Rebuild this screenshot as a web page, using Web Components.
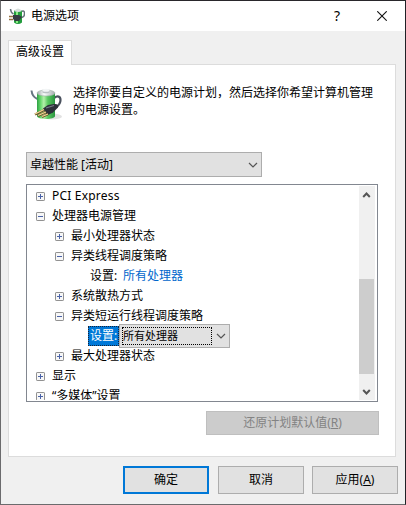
<!DOCTYPE html>
<html lang="zh-CN">
<head>
<meta charset="utf-8">
<title>电源选项</title>
<style>
html,body{margin:0;width:406px;height:505px;overflow:hidden}
body{font:12px/16px "Noto Sans","Noto Sans CJK SC",sans-serif;color:#000;background:#29272b}
</style>
</head>
<body>
<power-window heading="电源选项">
  <tab-sheet label="高级设置">
    <plan-intro>选择你要自定义的电源计划，然后选择你希望计算机管理的电源设置。</plan-intro>
    <combo-box class="plan">卓越性能 [活动]</combo-box>
    <tree-view>
      <tree-row style="letter-spacing:.2px">PCI Express</tree-row>
      <tree-row open>处理器电源管理</tree-row>
      <tree-row level="2">最小处理器状态</tree-row>
      <tree-row level="2" open>异类线程调度策略</tree-row>
      <setting-row label="设置:"><span class="link">所有处理器</span></setting-row>
      <tree-row level="2">系统散热方式</tree-row>
      <tree-row level="2" open>异类短运行线程调度策略</tree-row>
      <setting-row label="设置:" selected><combo-box focused>所有处理器</combo-box></setting-row>
      <tree-row level="2">最大处理器状态</tree-row>
      <tree-row>显示</tree-row>
      <tree-row>“多媒体”设置</tree-row>
    </tree-view>
    <push-button class="restore" disabled>还原计划默认值(<u>R</u>)</push-button>
  </tab-sheet>
  <push-button slot="actions" default>确定</push-button>
  <push-button slot="actions">取消</push-button>
  <push-button slot="actions">应用(<u>A</u>)</push-button>
</power-window>
<script>
const define = (name, render) => customElements.define(name, class extends HTMLElement {
  constructor() {
    super();
    this.attachShadow({mode: 'open'}).innerHTML =
      '<style>*{box-sizing:border-box}:host{box-sizing:border-box}</style>' + render(this);
  }
});

define('battery-icon', () => `<style>:host{display:block;flex:none}svg{display:block;width:100%;height:100%}</style>
<svg viewBox="0 0 34 34">
  <defs>
    <linearGradient id="g"><stop offset="0" stop-color="#2f9f45"/><stop offset=".18" stop-color="#5fd566"/><stop offset=".38" stop-color="#b4f0aa"/><stop offset=".6" stop-color="#58c95f"/><stop offset="1" stop-color="#2a9440"/></linearGradient>
    <linearGradient id="m"><stop offset="0" stop-color="#a0a8a9"/><stop offset=".4" stop-color="#fafcfb"/><stop offset="1" stop-color="#a2abad"/></linearGradient>
  </defs>
  <ellipse cx="22" cy="28.500" rx="10" ry="3" fill="#e2e2e2"/>
  <path d="M1.500 2.500c.4 4 2 7 6 8.500" fill="none" stroke="#667481" stroke-width="2"/>
  <path d="M24 10c3.500-2.500 6.500-2 6.500 2 0 3.500-1.500 5-4 7" fill="none" stroke="#4a515e" stroke-width="2.200"/>
  <path d="M7 5v23c0 4 18 4 18 0V5z" fill="url(#g)"/>
  <ellipse cx="16" cy="5" rx="9" ry="3" fill="url(#m)" stroke="#9fb0a7" stroke-width=".6"/>
  <path d="M12.500 2.500v2c0 1 7 1 7 0v-2z" fill="#b9c0c2"/><ellipse cx="16" cy="2.300" rx="3.500" ry="1.500" fill="#f3f5f6"/>
  <path d="M13 20.500l5-3.500 6-1c3-.5 5 1 4 3.500l-5 5-6 3z" fill="#2d303a"/><path d="M16 20l8-2.500" stroke="#777d8a" stroke-width="1.300"/>
  <path d="M14 22l-9 4.500M16 24l-8 4M18 26l-6 3" stroke="#6c5027" stroke-width="2.400"/><path d="M14 21.500l-9 4.500M16 24l-8 3.500M18 26l-6 2.500" stroke="#f3d998" stroke-width="1.200"/>
</svg>`);

define('app-icon', () => `<style>:host{display:block;width:16px;height:17px;flex:none}svg{display:block}</style>
<svg width="16" height="17" viewBox="0 0 16 17">
  <path d="M1.500 1c.2 3 1 4 3 5M11.500 4c3-2 4-1 4 1.500 0 3-1 3.500-4 4.500" fill="none" stroke="#65717a" stroke-width="1.500"/>
  <path d="M5 2.500h8v12q-4 3-8 0z" fill="#239c3d"/><path d="M8 4v11" stroke="#8bea83" stroke-width="2"/>
  <path d="M5 3q4-5 8 0-4 2-8 0z" fill="#d7dfdc"/>
  <path d="M4 7h6l3 2-3 4H6l-2-2z" fill="#353b42"/><path d="M0 8.500h4M0 11.500h4" stroke="#957243" stroke-width="1.300"/>
</svg>`);

define('power-window', el => `<style>
:host{display:flex;flex-direction:column;width:406px;height:505px;border:1px solid #6b6b6d;border-top-color:#29272b;border-right-color:#202126;background:#f0f0f0}
header{height:30px;display:flex;align-items:center;background:#fff;padding:0 18px 0 8px;flex:none}
h1{font:inherit;margin:0 0 0 6px;flex:1}
.help{font-size:14px;width:10px;text-align:center;margin-right:35px}
main{padding:9px 9px 0 7px;height:426px;flex:none}
footer{display:flex;justify-content:flex-end;gap:8px;padding:9px 7px 0 0}
::slotted([slot=actions]){width:86px;height:28px}
</style>
<header><app-icon></app-icon><h1>${el.getAttribute('heading')}</h1><span class="help">?</span>
<svg width="10" height="10" viewBox="0 0 10 10"><path d="M.3.3l9.400 9.400M9.700.3L.3 9.700" stroke="#111" stroke-width="1.100"/></svg></header>
<main><slot></slot></main><footer><slot name="actions"></slot></footer>`);

define('tab-sheet', el => `<style>
:host{display:flex;flex-direction:column;height:417px}
.tab{width:64px;height:25px;border:1px solid #dcdcdc;border-bottom:0;background:#fff;padding:3px 0 0 7px;margin-bottom:-1px;position:relative;flex:none}
.page{flex:1;border:1px solid #dcdcdc;background:#fff;padding:23px 16px 0 17px;display:flex;flex-direction:column}
::slotted(.plan){width:236px;height:25px;margin-top:30px}
::slotted(tree-view){margin-top:7px}
::slotted(.restore){width:173px;height:24px;align-self:flex-end;margin:9px 0 0 0}
</style><div class="tab">${el.getAttribute('label')}</div><div class="page"><slot></slot></div>`);

define('plan-intro', () => `<style>
:host{display:flex;height:34px}battery-icon{width:34px;height:34px;margin-left:4px}
p{margin:-4px -20px 0 9px;width:304px;line-height:17px}
</style><battery-icon></battery-icon><p><slot></slot></p>`);

define('combo-box', el => `<style>
:host{display:flex;align-items:center;background:#e1e1e1;border:1px solid #adadad;padding:0 3px;flex:none;line-height:17px}
:host([focused]){width:111px;height:24px;padding:0 3px 0 2px;margin:0}
.text{flex:1}:host([focused]) .text{font-size:11px;height:18px;border:1px dotted #000;padding-left:0;margin-right:4px;line-height:16px}
svg{flex:none}
</style><span class="text"><slot></slot></span>
<svg width="10" height="8" viewBox="0 0 10 8"><path d="M1 2l4 4 4-4" fill="none" stroke="#555" stroke-width="1.200"/></svg>`);

define('push-button', () => `<style>
:host{display:flex;align-items:center;justify-content:center;background:#e1e1e1;border:1px solid #adadad;flex:none}
:host([default]){border:2px solid #0078d7;margin-right:1px}
:host([disabled]){background:#ccc;border-color:#bfbfbf;color:#838383}
</style><span><slot></slot></span>`);

define('tree-view', () => `<style>
:host{display:flex;height:218px;width:352px;border:1px solid #828790;padding:1px;background:#fff;overflow:hidden;flex:none}
.rows{flex:1;overflow:hidden}
::slotted(*){height:20px}
</style><div class="rows"><slot></slot></div><scroll-bar></scroll-bar>`);

define('scroll-bar', () => `<style>
:host{display:flex;flex-direction:column;width:16px;margin-right:1px;background:#f0f0f0}
svg{display:block;flex:none}.track{flex:1;padding-top:76px}.thumb{height:95px;width:15px;background:#cdcdcd}
</style><svg width="16" height="17" viewBox="0 0 16 17"><path d="M4.200 11L7.500 7.500l3.300 3.500" fill="none" stroke="#555" stroke-width="2"/></svg>
<div class="track"><div class="thumb"></div></div>
<svg width="16" height="17" viewBox="0 0 16 17"><path d="M4.200 7L7.500 10.500 10.800 7" fill="none" stroke="#555" stroke-width="2"/></svg>`);

define('tree-row', el => `<style>
:host{display:flex;align-items:center;padding-left:8px;white-space:nowrap}
:host([level="2"]){padding-left:27px}
svg{flex:none;margin-right:7px}.label{line-height:20px}
</style><svg width="9" height="9" viewBox="0 0 9 9"><rect x=".5" y=".5" width="8" height="8" rx=".6" fill="#f7f7f7" stroke="#919191"/><path d="M2 4.500h5${el.hasAttribute('open') ? '' : 'M4.500 2v5'}" stroke="#4b63a7"/></svg><span class="label"><slot></slot></span>`);

define('setting-row', el => `<style>
:host{display:flex;align-items:center;padding-left:60px;white-space:nowrap}
.name{width:31px;height:20px;line-height:18px;padding-left:1px;border:1px solid transparent;flex:none}
:host([selected]) .name{background:#0078d7;color:#fff;border:1px dotted #15233a}
::slotted(.link){color:#0066cc;margin-left:4px}
</style><span class="name">${el.getAttribute('label')}</span><slot></slot>`);
</script>
</body>
</html>
